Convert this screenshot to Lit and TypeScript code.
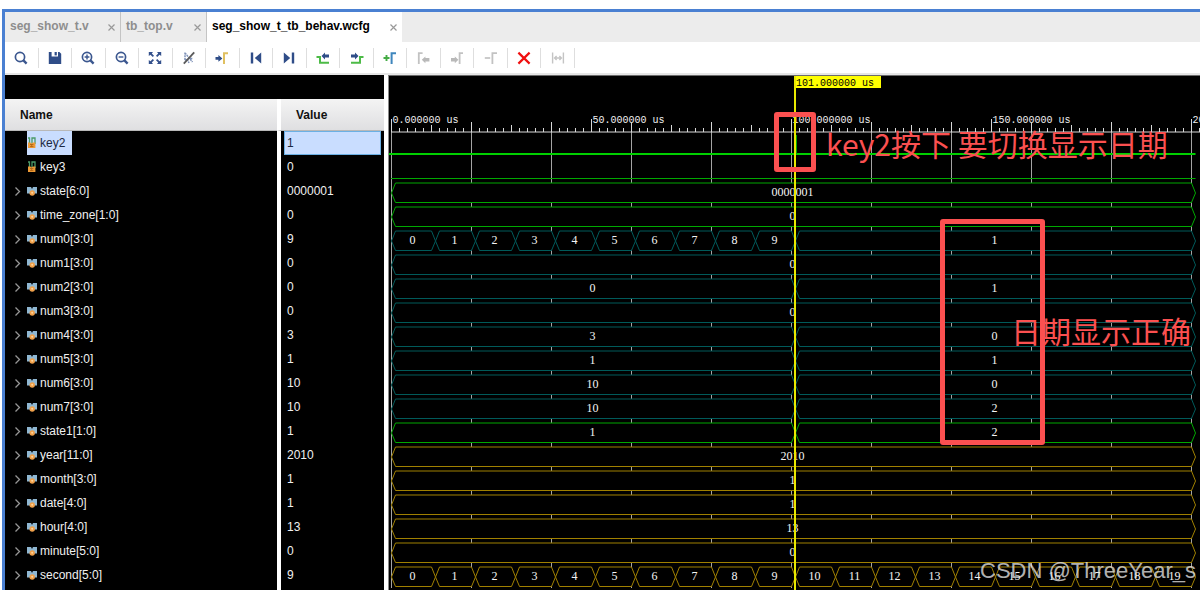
import { LitElement, html, css, svg } from "lit";
import { customElement, state } from "lit/decorators.js";
import { classMap } from "lit/directives/class-map.js";

type Kind = "bit" | "bus";
interface Segment {
  from: number;
  to: number;
  text: string;
}
interface Signal {
  name: string;
  value: string;
  kind: Kind;
  tone: "green" | "teal" | "gold";
  segments: Segment[];
}

const END = 201;
const CURSOR = 101;
const whole = (text: string): Segment[] => [{ from: 0, to: END, text }];
const split = (a: string, b: string): Segment[] => [
  { from: 0, to: CURSOR, text: a },
  { from: CURSOR, to: END, text: b },
];
const counter = (count: number): Segment[] =>
  Array.from({ length: count }, (_, i) => ({
    from: i === 0 ? 0 : i * 10 + 1,
    to: i * 10 + 11,
    text: String(i),
  }));

const bus = (name: string, value: string, tone: Signal["tone"], segments: Segment[]): Signal => ({
  name,
  value,
  kind: "bus",
  tone,
  segments,
});

const SIGNALS: Signal[] = [
  { name: "key2", value: "1", kind: "bit", tone: "green", segments: [] },
  { name: "key3", value: "0", kind: "bit", tone: "green", segments: [] },
  bus("state[6:0]", "0000001", "green", whole("0000001")),
  bus("time_zone[1:0]", "0", "green", whole("0")),
  bus("num0[3:0]", "9", "teal", [...counter(10), { from: CURSOR, to: END, text: "1" }]),
  bus("num1[3:0]", "0", "teal", whole("0")),
  bus("num2[3:0]", "0", "teal", split("0", "1")),
  bus("num3[3:0]", "0", "teal", whole("0")),
  bus("num4[3:0]", "3", "teal", split("3", "0")),
  bus("num5[3:0]", "1", "teal", split("1", "1")),
  bus("num6[3:0]", "10", "teal", split("10", "0")),
  bus("num7[3:0]", "10", "teal", split("10", "2")),
  bus("state1[1:0]", "1", "green", split("1", "2")),
  bus("year[11:0]", "2010", "gold", whole("2010")),
  bus("month[3:0]", "1", "gold", whole("1")),
  bus("date[4:0]", "1", "gold", whole("1")),
  bus("hour[4:0]", "13", "gold", whole("13")),
  bus("minute[5:0]", "0", "gold", whole("0")),
  bus("second[5:0]", "9", "gold", counter(20)),
];

const lens = svg`<circle cx="7" cy="7" r="4.6" fill="none" stroke="#3b578f" stroke-width="1.7"/>
  <path d="M10.2 10.2L13.6 13.6" stroke="#3b578f" stroke-width="2.4"/>`;

const TOOLS = [
  { label: "Find", off: false, icon: lens },
  {
    label: "Save",
    off: false,
    icon: svg`<path fill="#2f4d88" d="M1.8 2H4.6V6.6H11V2H12.4L14.2 3.8V14H1.8Z"/><path fill="#2f4d88" d="M7.6 2H9.8V5.4H7.6Z"/>`,
  },
  {
    label: "Zoom in",
    off: false,
    icon: svg`${lens}<path d="M4.6 7H9.4M7 4.6V9.4" stroke="#3b578f" stroke-width="1.4"/>`,
  },
  {
    label: "Zoom out",
    off: false,
    icon: svg`${lens}<path d="M4.6 7H9.4" stroke="#3b578f" stroke-width="1.4"/>`,
  },
  {
    label: "Zoom fit",
    off: false,
    icon: svg`<path fill="#34518c" d="M1.8 2H6L4.8 3.4L7 5.8L5.8 7L3.4 4.8L1.8 6ZM14.2 2V6L12.6 4.8L10.2 7L9 5.8L11.2 3.4L10 2ZM1.8 14V10L3.4 11.2L5.8 9L7 10.2L4.8 12.6L6 14ZM14.2 14H10L11.2 12.6L9 10.2L10.2 9L12.6 11.2L14.2 10Z"/>`,
  },
  {
    label: "Snap off",
    off: false,
    icon: svg`<path d="M4 2.5V10.5M4 3L11.5 12M4 10.5L6.2 9L8 13M9 8.6H12" fill="none" stroke="#7f92b8" stroke-width="1.5" stroke-dasharray="2 .7"/><path d="M2.8 13.6L13.2 2.4" stroke="#5a5a5a" stroke-width="1.8"/>`,
  },
  {
    label: "Go to cursor",
    off: false,
    icon: svg`<path fill="#2f4d88" d="M1.5 7H4.4V5L8.4 8.4L4.4 11.8V9.8H1.5Z"/><path d="M10 14V3.2H14" fill="none" stroke="#e0c060" stroke-width="2"/>`,
  },
  {
    label: "Go to start",
    off: false,
    icon: svg`<path fill="#2f4d88" d="M2.8 2.4H5.2V13.6H2.8ZM13.2 2.4V13.6L6.8 8Z"/>`,
  },
  {
    label: "Go to end",
    off: false,
    icon: svg`<path fill="#2f4d88" d="M10.8 2.4H13.2V13.6H10.8ZM2.8 2.4V13.6L9.2 8Z"/>`,
  },
  {
    label: "Previous transition",
    off: false,
    icon: svg`<path d="M1.5 7H5V12.8H14" fill="none" stroke="#4dbb47" stroke-width="2"/><path fill="#2f4d88" d="M6.5 6L10 2.6V4.6H14V7.4H10V9.4Z"/>`,
  },
  {
    label: "Next transition",
    off: false,
    icon: svg`<path d="M2 12.8H11V7H14.5" fill="none" stroke="#4dbb47" stroke-width="2"/><path fill="#2f4d88" d="M9.5 6L6 2.6V4.6H2V7.4H6V9.4Z"/>`,
  },
  {
    label: "Add marker",
    off: false,
    icon: svg`<path d="M1.5 8H7.5M4.5 5V11" stroke="#45ac45" stroke-width="1.9"/><path d="M9.6 14V3.2H14" fill="none" stroke="#3f86bd" stroke-width="2"/>`,
  },
  {
    label: "Previous marker",
    off: true,
    icon: svg`<path d="M2.8 14V3.2H6.6" fill="none" stroke="#c2c2c2" stroke-width="1.8"/><path fill="#b9b9b9" d="M5.8 9.8L9.4 6.4V8H13.4V11.6H9.4V13.2Z"/>`,
  },
  {
    label: "Next marker",
    off: true,
    icon: svg`<path d="M10.6 14V3.2H14" fill="none" stroke="#c2c2c2" stroke-width="1.8"/><path fill="#b9b9b9" d="M9.4 9.8L5.8 6.4V8H2V11.6H5.8V13.2Z"/>`,
  },
  {
    label: "Remove marker",
    off: true,
    icon: svg`<path d="M1.8 8H7.2" stroke="#c2c2c2" stroke-width="1.7"/><path d="M9.4 14V3.2H14" fill="none" stroke="#c2c2c2" stroke-width="1.8"/>`,
  },
  {
    label: "Delete all markers",
    off: false,
    icon: svg`<path d="M2.4 2.6L13.6 13.6M13.6 2.6L2.4 13.6" stroke="#f01010" stroke-width="2.2"/>`,
  },
  {
    label: "Swap cursors",
    off: true,
    icon: svg`<path d="M2.6 2.4V13.6M13.4 2.4V13.6M4.6 8H11.4M6.6 6L4.6 8L6.6 10M9.4 6L11.4 8L9.4 10" fill="none" stroke="#c4c4c4" stroke-width="1.4"/>`,
  },
];

@customElement("wave-view")
export class WaveView extends LitElement {
  static styles = css`
    :host {
      display: block;
      position: relative;
      overflow: hidden;
      background: #000;
      border-left: 1px solid #8a8a8a;
      border-top: 1px solid #6b6b6b;
    }
    .plot {
      display: block;
      width: 100%;
      height: 100%;
      min-height: 515px;
    }
    .grid {
      stroke: #a4a4a4;
    }
    .tick {
      stroke: #d8d8d8;
    }
    .time {
      font: 10px "Liberation Mono", monospace;
      fill: #f0f0f0;
    }
    .value {
      font: 12px "Liberation Serif", serif;
      fill: #f4f4f4;
      text-anchor: middle;
    }
    .shape {
      fill: #000;
      stroke-width: 1;
    }
    .green {
      stroke: #00a800;
    }
    .teal {
      stroke: #005a5a;
    }
    .gold {
      stroke: #a08000;
    }
    .active {
      stroke: #00d000;
      stroke-width: 2;
    }
    .flag {
      fill: #ffff00;
    }
    .flag-text {
      font: 10px "Liberation Mono", monospace;
      fill: #000;
    }
    .cursor {
      stroke: #e8e800;
      stroke-width: 2;
    }
    .frame {
      position: absolute;
      box-sizing: border-box;
      border: 5px solid #fb5050;
      border-radius: 3px;
    }
    .frame-key {
      left: 385px;
      top: 36px;
      width: 42px;
      height: 60px;
    }
    .frame-date {
      left: 551px;
      top: 143px;
      width: 105px;
      height: 226px;
    }
    .note {
      position: absolute;
      margin: 0;
      color: #fb5050;
      font: 30px/40px "Noto Sans CJK SC", sans-serif;
      white-space: nowrap;
    }
    .note-key {
      left: 437px;
      top: 47px;
    }
    .note-date {
      left: 622px;
      top: 234px;
    }
  `;

  private x(t: number) {
    return 2.5 + t * 4;
  }

  private ruler() {
    const marks = [];
    for (let t = 0; t <= 600; t += 2) {
      const x = this.x(t);
      if (t % 20 === 0) marks.push(svg`<line class="grid" x1=${x} x2=${x} y1="46" y2="512"/>`);
      const top = t % 50 === 0 ? 43 : t % 20 === 0 ? 46 : t % 10 === 0 ? 49 : 52;
      marks.push(svg`<line class="tick" x1=${x} x2=${x} y1=${top} y2="56"/>`);
      if (t % 50 === 0 && t < END)
        marks.push(svg`<text class="time" x=${x + 1} y="47">${t}.000000 us</text>`);
    }
    return marks;
  }

  private row(signal: Signal, i: number) {
    const y = 55 + i * 24;
    if (signal.kind === "bit") {
      return i === 0
        ? svg`<path class="active" d="M0 ${y + 23}H${this.x(END)}"/>
            <path class="green" d="M${this.x(CURSOR) + 1} ${y + 4}V${y + 23}"/>`
        : svg`<path class="green" d="M2 ${y + 23.5}H${this.x(END)}"/>`;
    }
    return signal.segments.map(({ from, to, text }) => {
      const a = this.x(from);
      const b = this.x(to);
      const d = `M${a} ${y + 14}L${a + 4} ${y + 4}H${b - 4}L${b} ${y + 14}L${b - 4} ${y + 23.5}H${a + 4}Z`;
      return svg`<path class="shape ${signal.tone}" d=${d}/>
        <text class="value" x=${(a + b) / 2 - 1} y=${y + 17}>${text}</text>`;
    });
  }

  render() {
    const cx = this.x(CURSOR) - 0.5;
    return html`
      <svg class="plot" role="img" aria-label="Waveforms">
        ${this.ruler()}
        <line class="tick" x1="2" x2="100%" y1="56" y2="56" />
        ${SIGNALS.map((s, i) => this.row(s, i))}
        <rect class="flag" x=${cx - 1} y="0" width="87" height="12" />
        <text class="flag-text" x=${cx + 1} y="10">101.000000 us</text>
        <line class="cursor" x1=${cx} x2=${cx} y1="0" y2="100%" />
      </svg>
      <div class="frame frame-key"></div>
      <div class="frame frame-date"></div>
      <p class="note note-key">key2按下 要切换显示日期</p>
      <p class="note note-date">日期显示正确</p>
    `;
  }
}

@customElement("app-root")
export class AppRoot extends LitElement {
  static styles = css`
    :host {
      display: flex;
      flex-direction: column;
      position: relative;
      box-sizing: border-box;
      height: 100vh;
      overflow: hidden;
      padding: 9px 0 0 2px;
      background: #fff;
      font: 12px/16px "Liberation Sans", sans-serif;
      color: #000;
    }
    button {
      border: 0;
      padding: 0;
      background: none;
      font: inherit;
      color: inherit;
    }
    .window {
      flex: 1;
      min-height: 0;
      display: flex;
      flex-direction: column;
      border: solid #4a80d2;
      border-width: 3px 0 0 3px;
    }
    .tabs {
      display: flex;
      height: 30px;
      background: #ececec;
    }
    .tab {
      display: flex;
      align-items: center;
      justify-content: space-between;
      box-sizing: border-box;
      padding: 0 4px 2px 5px;
      color: #8e8e8e;
      font-weight: bold;
      border-right: 1px solid #c4c4c4;
    }
    .tab-source {
      width: 116px;
    }
    .tab-top {
      width: 86px;
    }
    .tab-wave {
      width: 195px;
      background: #fff;
      color: #000;
      border-right: 0;
    }
    .close {
      display: flex;
      padding-top: 3px;
    }
    .tools {
      display: grid;
      grid-template-columns: repeat(17, 1fr);
      width: 570px;
      height: 31px;
      align-items: center;
    }
    .tool {
      display: flex;
      align-items: center;
      justify-content: center;
      height: 20px;
      border-right: 1px solid #dedede;
    }
    .main {
      flex: 1;
      min-height: 0;
      display: grid;
      grid-template-columns: 379px minmax(0, 1fr);
      column-gap: 4px;
      border-top: 2px solid #e6e6e6;
    }
    .signals {
      overflow: hidden;
      background: #000;
      padding-top: 24px;
    }
    .list {
      width: 100%;
      table-layout: fixed;
      border-collapse: separate;
      border-spacing: 0;
      color: #f0f0f0;
    }
    .name-col {
      width: 272px;
    }
    th {
      height: 32px;
      box-sizing: border-box;
      padding: 0 15px;
      text-align: left;
      color: #111;
      background: linear-gradient(#f4f4f4, #dfdfe1);
      border-bottom: 1px solid #b8b8b8;
    }
    td {
      height: 24px;
      padding: 0;
    }
    th + th,
    td + td {
      border-left: 4px solid #fff;
      background-clip: padding-box;
    }
    .name {
      display: flex;
      align-items: center;
      height: 24px;
      padding-left: 8px;
    }
    .arrow {
      width: 14px;
      height: 16px;
    }
    .label {
      display: flex;
      align-items: center;
      gap: 3px;
      height: 24px;
      padding-right: 7px;
    }
    .value {
      display: flex;
      align-items: center;
      box-sizing: border-box;
      height: 24px;
      margin: 0 3px;
      padding-left: 2px;
      border: 1px solid transparent;
    }
    .selected {
      background: #c9ddff;
      color: #1c2840;
    }
    .value.selected {
      border-color: #6cb0e4;
    }
    .watermark {
      position: absolute;
      right: 4px;
      bottom: 3px;
      font: 22px/32px "Liberation Sans", sans-serif;
      color: rgba(225, 225, 225, 0.8);
    }
  `;

  @state() private selected = "key2";

  private tab(name: string, kind: string) {
    return html`<div class="tab ${kind}">
      <button>${name}</button>
      <button class="close" aria-label="Close ${name}">
        <svg width="9" height="9" viewBox="0 0 9 9">
          <path d="M1.5 1.5L7.5 7.5M7.5 1.5L1.5 7.5" stroke="#999" stroke-width="1.2" />
        </svg>
      </button>
    </div>`;
  }

  private glyph(kind: Kind) {
    return kind === "bit"
      ? html`<svg width="10" height="12" viewBox="0 0 10 12">
          <path d="M1 1H2.5V7M5 7V1H8V7" fill="none" stroke="#4b9a68" stroke-width="1.3" />
          <path d="M1 5.5H3.4L4.6 6.6L5.8 5.5H8.4V11H1Z" fill="#ee9a36" />
          <path d="M3 7.5H6.4M3 9.6H6.4M4.7 7.5V9.6" stroke="#a85e10" stroke-width=".8" />
        </svg>`
      : html`<svg width="10" height="12" viewBox="0 0 10 12">
          <path d="M0 2H4L5 4L6 2H10V8.5H7.5L5 10L2.5 8.5H0Z" fill="#8fb7d2" />
          <circle cx="5.2" cy="8" r="2.7" fill="#f0a04a" />
          <circle cx="5.2" cy="7.8" r="1" fill="#ffd49a" />
        </svg>`;
  }

  private signalRow(s: Signal) {
    const selected = s.name === this.selected;
    return html`<tr @click=${() => (this.selected = s.name)}>
      <td>
        <div class="name">
          <svg class="arrow" viewBox="0 0 14 16">
            ${s.kind === "bus"
              ? svg`<path d="M2.5 4.5L6.5 8.5L2.5 12.5" fill="none" stroke="#969696" stroke-width="1.3"/>`
              : ""}
          </svg>
          <span class=${classMap({ label: true, selected })}>${this.glyph(s.kind)}${s.name}</span>
        </div>
      </td>
      <td><div class=${classMap({ value: true, selected })}>${s.value}</div></td>
    </tr>`;
  }

  render() {
    return html`
      <div class="window">
        <nav class="tabs">
          ${this.tab("seg_show_t.v", "tab-source")} ${this.tab("tb_top.v", "tab-top")}
          ${this.tab("seg_show_t_tb_behav.wcfg", "tab-wave")}
        </nav>
        <div class="tools" role="toolbar">
          ${TOOLS.map(
            (t) => html`<button class="tool" aria-label=${t.label} ?disabled=${t.off}>
              <svg width="16" height="16" viewBox="0 0 16 16">${t.icon}</svg>
            </button>`,
          )}
        </div>
        <div class="main">
          <div class="signals">
            <table class="list">
              <colgroup>
                <col class="name-col" />
                <col />
              </colgroup>
              <thead>
                <tr>
                  <th>Name</th>
                  <th>Value</th>
                </tr>
              </thead>
              <tbody>
                ${SIGNALS.map((s) => this.signalRow(s))}
                <tr aria-hidden="true">
                  <td></td>
                  <td></td>
                </tr>
              </tbody>
            </table>
          </div>
          <wave-view></wave-view>
        </div>
      </div>
      <div class="watermark">CSDN @ThreeYear_s</div>
    `;
  }
}
